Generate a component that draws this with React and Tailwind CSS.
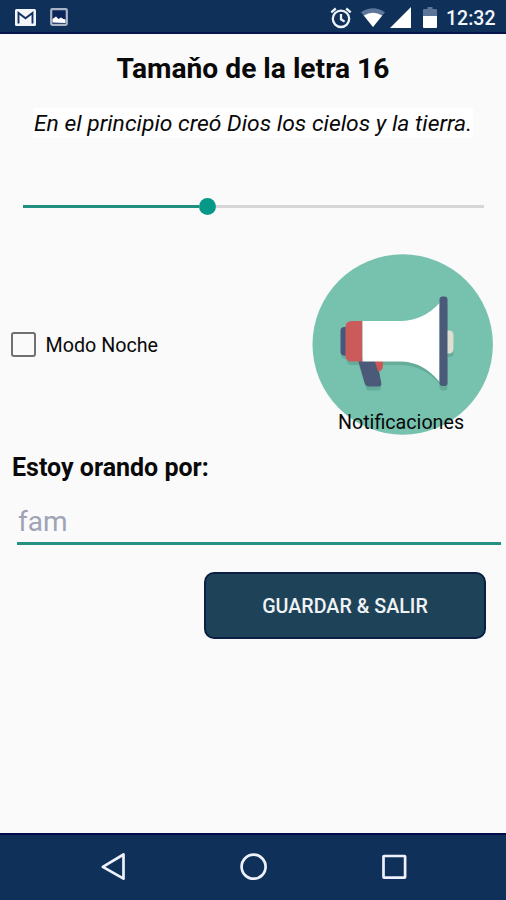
import React from "react";

const GmailIcon = () => (
  <svg width="21" height="17" viewBox="0 0 21 17">
    <rect width="21" height="17" rx="1.5" fill="#f3f5fb" />
    <path
      d="M3.500 14.500V4l7 5.300L17.500 4v10.500"
      fill="none"
      stroke="#123163"
      strokeWidth="1.900"
    />
  </svg>
);

const PictureIcon = () => (
  <svg width="18" height="18" viewBox="0 0 18 18">
    <rect
      x="1.2"
      y="1.2"
      width="15.6"
      height="15.6"
      rx="1"
      fill="#0d2558"
      stroke="#a9b4c6"
      strokeWidth="2.200"
    />
    <path d="M2.500 14.500V11L6 8.500l2.500 2.500 2.500-1.500 2.500 1.500 2 .5v3.500z" fill="#fff" />
  </svg>
);

const AlarmIcon = () => (
  <svg
    width="22"
    height="22"
    viewBox="0 0 22 22"
    fill="none"
    stroke="#eef2fa"
    strokeWidth="2.300"
  >
    <circle cx="11" cy="11.800" r="8.200" />
    <path d="M11 7v5.300l3.600 2.300M1.300 5.300l4.500-3.800M20.700 5.300l-4.500-3.800" />
  </svg>
);

const WifiIcon = () => (
  <svg width="24" height="19" viewBox="0 0 24 19">
    <path d="M12 19L0 4.200Q12-3.600 24 4.200z" fill="#5b7698" />
    <path d="M12 19L2.800 7.600Q12 1.800 21.200 7.600z" fill="#fff" />
  </svg>
);

const SignalIcon = () => (
  <svg width="21" height="21" viewBox="0 0 21 21">
    <path d="M21 0v21H0z" fill="#fff" />
  </svg>
);

const BatteryIcon = () => (
  <svg width="14" height="21" viewBox="0 0 14 21">
    <path d="M4.500 0h5v2H13q1 0 1 1v6H0V3q0-1 1-1h3.500z" fill="#5b7698" />
    <path d="M0 9h14v11a1 1 0 0 1-1 1H1a1 1 0 0 1-1-1z" fill="#fff" />
  </svg>
);

const Megaphone = () => (
  <svg className="h-[181px] w-[181px]" viewBox="0 0 181 181">
    <circle cx="90.700" cy="90.500" r="90.200" fill="#77c2ae" />
    {/* Shadow, the same outlines a few pixels lower */}
    <g fill="#5fa394" opacity="0.7">
      <path d="M29 95v6q1 4 5 4 1 6 6 6h50q22 1 37.500 19V100z" />
      <rect x="127.500" y="50" width="8" height="86.500" rx="3" />
      <path d="M46.500 110l7 23q1 3.500 4 3.500h8q4 0 3.500-4L64 110z" />
      <path d="M134 84h7.500v15q0 4-4.500 4h-3z" />
    </g>
    <path
      d="M45.500 104l7 24.500q1 4 4.500 4h9.500q3.500 0 2.800-3.500L64.500 104z"
      fill="#4a5a78"
    />
    <path d="M62.500 106h7.500q1 2 1 5 0 6-5 6.500z" fill="#cb5654" />
    <rect x="28.500" y="73" width="12" height="28.500" rx="4" fill="#47567a" />
    <path
      d="M40 67h10.500v40.500H40q-6.500 0-6.500-6V73q0-6 6.500-6z"
      fill="#cb5b5a"
    />
    <path
      d="M50.500 67H90q22-1 37.500-18v79Q112 108.500 90 107.500H50.500z"
      fill="#fff"
    />
    <path d="M134 76.500h3q4.500 0 4.500 5v13q0 5-4.500 5h-3z" fill="#dedfd0" />
    <rect x="127.500" y="42.500" width="8" height="89.500" rx="3" fill="#4a5a78" />
  </svg>
);

const StatusBar = () => (
  <header className="flex h-[34px] items-center justify-between border-b-2 border-[#07114a] bg-[#0f3159] pl-[15px] pr-[10px]">
    <div className="flex items-center gap-[14px] pt-0.5">
      <GmailIcon />
      <PictureIcon />
    </div>
    <div className="flex items-center pt-[3px]">
      <AlarmIcon />
      <div className="ml-[9px]">
        <WifiIcon />
      </div>
      <div className="ml-[5px]">
        <SignalIcon />
      </div>
      <div className="ml-3">
        <BatteryIcon />
      </div>
      <span className="ml-[9px] mt-0.5 w-[50px] whitespace-nowrap text-[19.500px] font-medium leading-none text-[#f2f5fb]">
        12:32
      </span>
    </div>
  </header>
);

const FontSizeSlider = () => (
  <div className="ml-[23px] mr-[22px] mt-[60px] flex h-[17px] items-center">
    <div className="h-[3px] w-[176px] bg-[#209080]" />
    <div className="h-[17px] w-[17px] rounded-full bg-[#079987]" />
    <div className="h-[3px] flex-1 bg-[#d5d6d6]" />
  </div>
);

const NavBar = () => (
  <nav className="h-[67px] border-t-2 border-[#000c4a] bg-[#0f3159]">
    <svg
      width="506"
      height="65"
      viewBox="0 835 506 65"
      fill="none"
      stroke="#eef1fb"
      strokeWidth="2.700"
      strokeLinejoin="round"
    >
      <path d="M102.800 866.800L123.500 854.500v24.200z" />
      <circle cx="253.600" cy="866.700" r="12" />
      <rect x="383.500" y="856" width="21.600" height="21.600" rx="0.500" />
    </svg>
  </nav>
);

const App = () => {
  return (
    <div className="flex h-[900px] w-[506px] flex-col overflow-hidden bg-[#fafafa] font-['Roboto',sans-serif] text-[#090909]">
      <StatusBar />

      <main className="flex flex-1 flex-col">
        <h1 className="mt-[19px] h-8 whitespace-nowrap text-center text-[28.200px] font-bold leading-8">
          Tamaňo de la letra 16
        </h1>
        <p className="mx-auto mt-[23px] h-[30px] w-[440px] whitespace-nowrap bg-white text-center text-[22.900px] italic leading-8">
          En el principio creó Dios los cielos y la tierra.
        </p>

        <FontSizeSlider />

        <section className="mt-[39px] flex h-[181px] items-center justify-between pl-[11px] pr-[13px]">
          <label className="flex items-center gap-[9.500px] text-[19.700px]">
            <span className="h-[25px] w-[25px] rounded-[3px] border-2 border-[#707070]" />
            <span className="whitespace-nowrap pt-0.5">Modo Noche</span>
          </label>
          <div className="relative">
            <Megaphone />
            <span className="absolute bottom-0 left-0 w-[178px] text-center text-[19.700px] leading-6">
              Notificaciones
            </span>
          </div>
        </section>

        <h2 className="ml-3 mt-[17px] h-8 whitespace-nowrap text-[25px] font-bold leading-8">
          Estoy orando por:
        </h2>
        <div className="ml-[17px] mr-[5px] mt-4 h-[45px] border-b-[3px] border-[#269181] pl-px text-[28px] leading-[44px] text-[#a0a3b5]">
          fam
        </div>

        <button className="ml-[204px] mt-[27px] h-[67px] w-[282px] whitespace-nowrap rounded-[10px] border-2 border-[#0b1f45] bg-[#1e4358] pt-0.5 text-[19.700px] font-medium text-[#f0f3f6]">
          GUARDAR &amp; SALIR
        </button>
      </main>

      <NavBar />
    </div>
  );
};

export default App;
